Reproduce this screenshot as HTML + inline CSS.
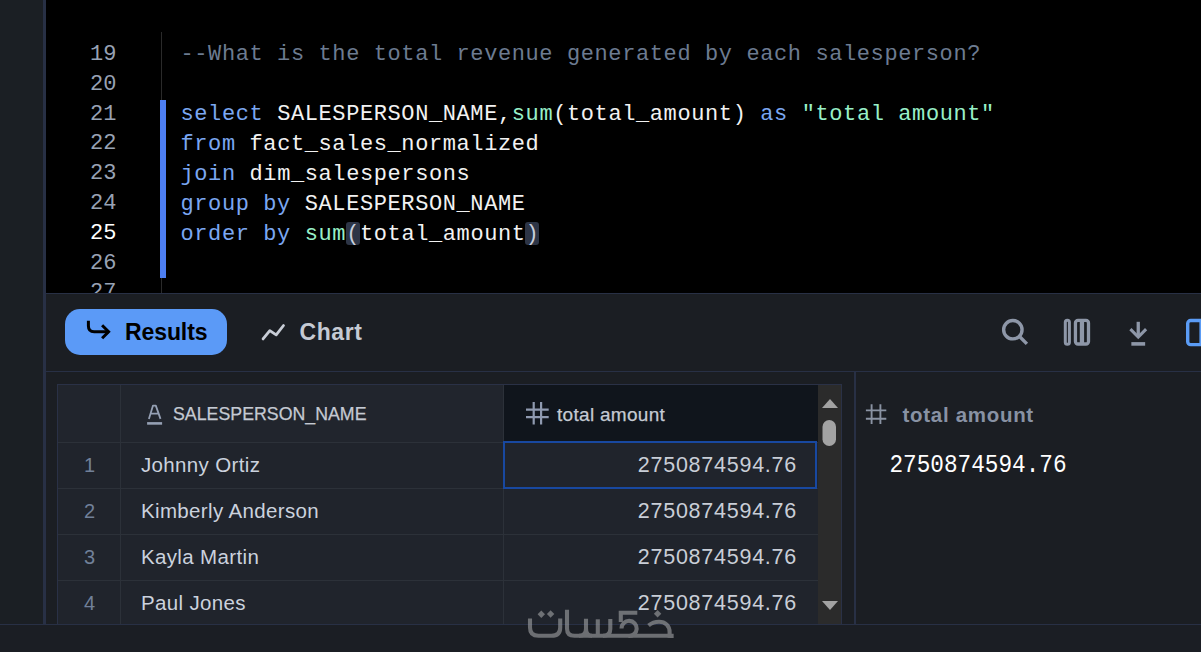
<!DOCTYPE html>
<html><head><meta charset="utf-8">
<style>
*{margin:0;padding:0;box-sizing:border-box}
html,body{width:1201px;height:652px;overflow:hidden;background:#1b1e24;position:relative}
body{font-family:"Liberation Sans",sans-serif}
.abs{position:absolute}
#side{left:0;top:0;width:43px;height:652px;background:#1b1f24}
#sideb{left:43px;top:0;width:3px;height:624px;background:#283045}
#editor{left:46px;top:0;width:1155px;height:293px;background:#000;overflow:hidden}
#hb{left:46px;top:293px;width:1155px;height:1px;background:#283045}
.ln{position:absolute;left:0;width:70.5px;text-align:right;font-family:"Liberation Mono",monospace;font-size:22px;line-height:30px;color:#98a2b4}
.code{position:absolute;left:134.5px;font-family:"Liberation Mono",monospace;font-size:22px;letter-spacing:0.6px;line-height:30px;color:#f2f2f2;white-space:pre}
.kw{color:#7ba7f2}
.fn{color:#98f0c8}
.cm{color:#6c7b91}
.par{color:#c8cfdc}
#gut{left:115px;top:32px;width:1px;height:261px;background:#2a2a2a}
#bar{left:114px;top:100px;width:6px;height:178px;background:#4d7ff2}
#panel{left:46px;top:294px;width:1155px;height:330px;background:#1b1e23}
#tbb{left:46px;top:371px;width:1155px;height:1px;background:#283045}
#bottom{left:0;top:624px;width:1201px;height:28px;background:#1b1e24;border-top:1px solid #283045}
#resbtn{left:65px;top:309px;width:162px;height:46px;background:#5b9af7;border-radius:15px}

.tbtxt{position:absolute;font-weight:bold;font-size:24px;line-height:30px;white-space:nowrap}
#tbl{left:57px;top:384px;width:785px;height:240px;background:#20242c;border:1px solid #2a3146;border-bottom:none;overflow:hidden}
.hdr{position:absolute;top:0;height:58px;background:#21252d}
.vline{position:absolute;width:1px;background:#2c3139}
.hline{position:absolute;height:1px;background:#2c3139}
.rn{position:absolute;left:0;width:63px;text-align:center;font-size:20px;color:#718099;line-height:44px}
.nm{position:absolute;left:83px;font-size:20.5px;letter-spacing:0.35px;color:#cbd2de;line-height:44px;white-space:nowrap}
.amt{position:absolute;left:447px;width:312px;text-align:right;padding-right:20px;font-size:21.5px;letter-spacing:0.75px;color:#c9ced7;line-height:44px;white-space:nowrap}
.hdt{position:absolute;font-size:19px;letter-spacing:-0.85px;color:#c5cad3;line-height:58px;white-space:nowrap}
#sb{position:absolute;left:760px;top:0;width:24px;height:240px;background:#2b2b2b}
#divr{left:854px;top:372px;width:2px;height:252px;background:#283045}
</style></head><body>
<div class="abs" id="side"></div>
<div class="abs" id="sideb"></div>
<div class="abs" id="editor">
  <div class="ln" style="top:40.0px">19</div>
  <div class="ln" style="top:69.8px">20</div>
  <div class="ln" style="top:99.6px">21</div>
  <div class="ln" style="top:129.4px">22</div>
  <div class="ln" style="top:159.2px">23</div>
  <div class="ln" style="top:189.0px">24</div>
  <div class="ln" style="top:218.8px;color:#fff">25</div>
  <div class="ln" style="top:248.6px">26</div>
  <div class="ln" style="top:278.4px">27</div>
  <div class="abs" id="gut"></div><div class="abs" style="left:300px;top:222px;width:14px;height:23px;background:#2d3546;border-radius:3px"></div><div class="abs" style="left:478.8px;top:222px;width:14px;height:23px;background:#2d3546;border-radius:3px"></div>
  <div class="abs" id="bar"></div>
  <div class="code" style="top:40px"><span class="cm">--What is the total revenue generated by each salesperson?</span></div>
  <div class="code" style="top:100px"><span class="kw">select</span> SALESPERSON_NAME,<span class="fn">sum</span>(total_amount) <span class="kw">as</span> <span class="fn">"total amount"</span></div>
  <div class="code" style="top:130px"><span class="kw">from</span> fact_sales_normalized</div>
  <div class="code" style="top:160px"><span class="kw">join</span> dim_salespersons</div>
  <div class="code" style="top:190px"><span class="kw">group by</span> SALESPERSON_NAME</div>
  <div class="code" style="top:220px"><span class="kw">order by</span> <span class="fn">sum</span><span class="par">(</span>total_amount<span class="par">)</span></div>
</div>
<div class="abs" id="hb"></div>
<div class="abs" id="panel"></div>
<div class="abs" id="tbb"></div>
<div class="abs" id="resbtn"></div>

<svg class="abs" style="left:80px;top:312px" width="40" height="36" viewBox="0 0 40 36"><path d="M8.4 8.8V14Q8.4 19.75 14.2 19.75H28.5" fill="none" stroke="#000" stroke-width="3"/><path d="M22.1 13.3L28.6 19.75L22.1 26.3" fill="none" stroke="#000" stroke-width="3"/></svg>
<div class="tbtxt" style="left:125px;top:317px;color:#000;font-size:23px;letter-spacing:-0.1px">Results</div>
<svg class="abs" style="left:255px;top:315px" width="40" height="35" viewBox="0 0 40 35"><path d="M8.06 23.9L14.8 15.6L21.2 19.9L28.5 10.5" fill="none" stroke="#c8cdd6" stroke-width="2.8" stroke-linecap="round" stroke-linejoin="round"/></svg>
<div class="tbtxt" style="left:299.5px;top:317px;font-size:23px;letter-spacing:0.6px;color:#c5cad3">Chart</div>
<svg class="abs" style="left:995px;top:312px" width="40" height="40" viewBox="0 0 40 40"><circle cx="17.85" cy="17.7" r="9.2" fill="none" stroke="#8e97a8" stroke-width="3.4"/><path d="M24.3 24.3L31.9 31.9" stroke="#8e97a8" stroke-width="3.4"/></svg>
<svg class="abs" style="left:1060px;top:315px" width="35" height="35" viewBox="0 0 35 35"><rect x="5.3" y="5.25" width="4.1" height="24" rx="2" fill="none" stroke="#8e97a8" stroke-width="3"/><rect x="15.45" y="5.4" width="13.05" height="23.6" rx="2.5" fill="none" stroke="#8e97a8" stroke-width="3.3"/><path d="M21.95 5.4V29" stroke="#8e97a8" stroke-width="4.3"/></svg>
<svg class="abs" style="left:1120px;top:315px" width="35" height="35" viewBox="0 0 35 35"><path d="M18.25 6.8V22" fill="none" stroke="#8e97a8" stroke-width="3.3"/><path d="M10.4 14.2L18.25 22.1L26.1 14.2" fill="none" stroke="#8e97a8" stroke-width="3.1"/><path d="M11.35 28.9H25.15" stroke="#8e97a8" stroke-width="3.6"/></svg>
<svg class="abs" style="left:1180px;top:315px" width="21" height="35" viewBox="0 0 21 35"><rect x="7.7" y="5.45" width="30" height="24.2" rx="3" fill="none" stroke="#5b9cf5" stroke-width="3.4"/><path d="M20.6 5.45V29.65" stroke="#5b9cf5" stroke-width="2.4"/></svg>
<div class="abs" id="tbl">
  <div class="hdr" style="left:0;width:445px"></div>
  <div class="hdr" style="left:446px;width:314px;background:#10151c"></div>
  <div class="vline" style="left:62px;top:0;height:240px"></div>
  <div class="vline" style="left:445px;top:0;height:240px"></div>
  <div class="hline" style="left:0;top:57px;width:760px"></div>
  <div class="hline" style="left:0;top:103px;width:760px"></div>
  <div class="hline" style="left:0;top:149px;width:760px"></div>
  <div class="hline" style="left:0;top:195px;width:760px"></div>
  <svg style="position:absolute;left:88px;top:16px" width="20" height="26" viewBox="0 0 20 26"><path d="M2.9 17.9L7 4.6H9.8L14.5 17.9M4.6 12.7H12.9" fill="none" stroke="#95a0b4" stroke-width="1.8" stroke-linejoin="round"/><path d="M1.1 22.4H16.1" stroke="#95a0b4" stroke-width="2.6"/></svg>
  <div class="hdt" style="left:115px;top:0;letter-spacing:0;transform:scaleX(0.935);transform-origin:0 0;-webkit-text-stroke:0.25px #c5cad3">SALESPERSON_NAME</div>
  <svg style="position:absolute;left:467px;top:16px" width="26" height="26" viewBox="0 0 26 26"><path d="M8.7 1V23.4M16.1 1V23.4M1 8.6H23.7M1 16.1H23.7" fill="none" stroke="#8f9ab0" stroke-width="2.2"/></svg>
  <div class="hdt" style="left:499px;top:1px;letter-spacing:0.3px;-webkit-text-stroke:0.25px #c5cad3">total amount</div>
  <div class="rn" style="top:58px">1</div><div class="nm" style="top:58px">Johnny Ortiz</div><div class="amt" style="top:58px">2750874594.76</div>
  <div class="rn" style="top:104px">2</div><div class="nm" style="top:104px">Kimberly Anderson</div><div class="amt" style="top:104px">2750874594.76</div>
  <div class="rn" style="top:150px">3</div><div class="nm" style="top:150px">Kayla Martin</div><div class="amt" style="top:150px">2750874594.76</div>
  <div class="rn" style="top:196px">4</div><div class="nm" style="top:196px">Paul Jones</div><div class="amt" style="top:196px">2750874594.76</div>
  <div style="position:absolute;left:445px;top:56px;width:314px;height:48px;border:2px solid #1848a0"></div>
  <div id="sb">
    <svg style="position:absolute;left:0;top:0" width="24" height="240" viewBox="0 0 24 240"><path d="M4 23L12 14L20 23Z" fill="#a3a3a3"/><rect x="4.5" y="35" width="13.5" height="26" rx="6.75" fill="#a3a3a3"/><path d="M4 216L12 225L20 216Z" fill="#a3a3a3"/></svg>
  </div>
</div>
<div class="abs" id="divr"></div>
<svg class="abs" style="left:862px;top:400px" width="30" height="28" viewBox="0 0 30 28"><path d="M9.6 4.3V24M18.4 4.3V24M3.9 10.4H24.3M3.9 18.7H24.3" fill="none" stroke="#8a93a3" stroke-width="1.9"/></svg>
<div class="tbtxt" style="left:902.5px;top:400px;font-size:20.5px;letter-spacing:0.7px;color:#8892a4">total amount</div>
<div class="abs" style="left:889.5px;top:451px;font-family:'Liberation Mono',monospace;font-size:22.7px;line-height:30px;color:#fff;transform:scaleY(1.1);transform-origin:0 22px">2750874594.76</div>
<div class="abs" id="bottom"></div>
<svg class="abs" style="left:0;top:0;pointer-events:none" width="1201" height="652" viewBox="0 0 1201 652">
<g fill="none" stroke="#a3a4a6" stroke-width="4.1" opacity="0.6">
<path d="M530 618.5V627.5Q530 635.8 538.5 635.8H551.5Q560.2 635.8 560.2 627.5V618.5"/>
<path d="M567 609.8V628.5Q567 635.8 574.5 635.8H671.6V637.9"/>
<path d="M586 618.8V628.8Q586 635.8 579 635.8"/>
<path d="M586 628.8Q586 635.8 592 635.8"/>
<path d="M597.8 619.3V635.8"/>
<path d="M610.3 619V629Q610.3 635.8 603 635.8"/>
<path d="M618.7 612.7H637.3M620.8 610.7V622"/>
<path d="M621.5 628.4A7.6 7.6 0 1 1 628.5 636"/>
<path d="M648.5 625.5C652 622.6 656 621.7 659 621.7C665.5 621.7 669.6 626 669.6 632V637.8"/>
</g>
<g fill="#a3a4a6" opacity="0.6">
<path d="M541.3 610.6L545 614.3L541.3 618L537.6 614.3Z"/>
<path d="M550.6 610.3L554.3 614L550.6 617.7L546.9 614Z"/>
<path d="M657.6 610L661.3 613.7L657.6 617.4L653.9 613.7Z"/>
</g>
</svg>
</body></html>
